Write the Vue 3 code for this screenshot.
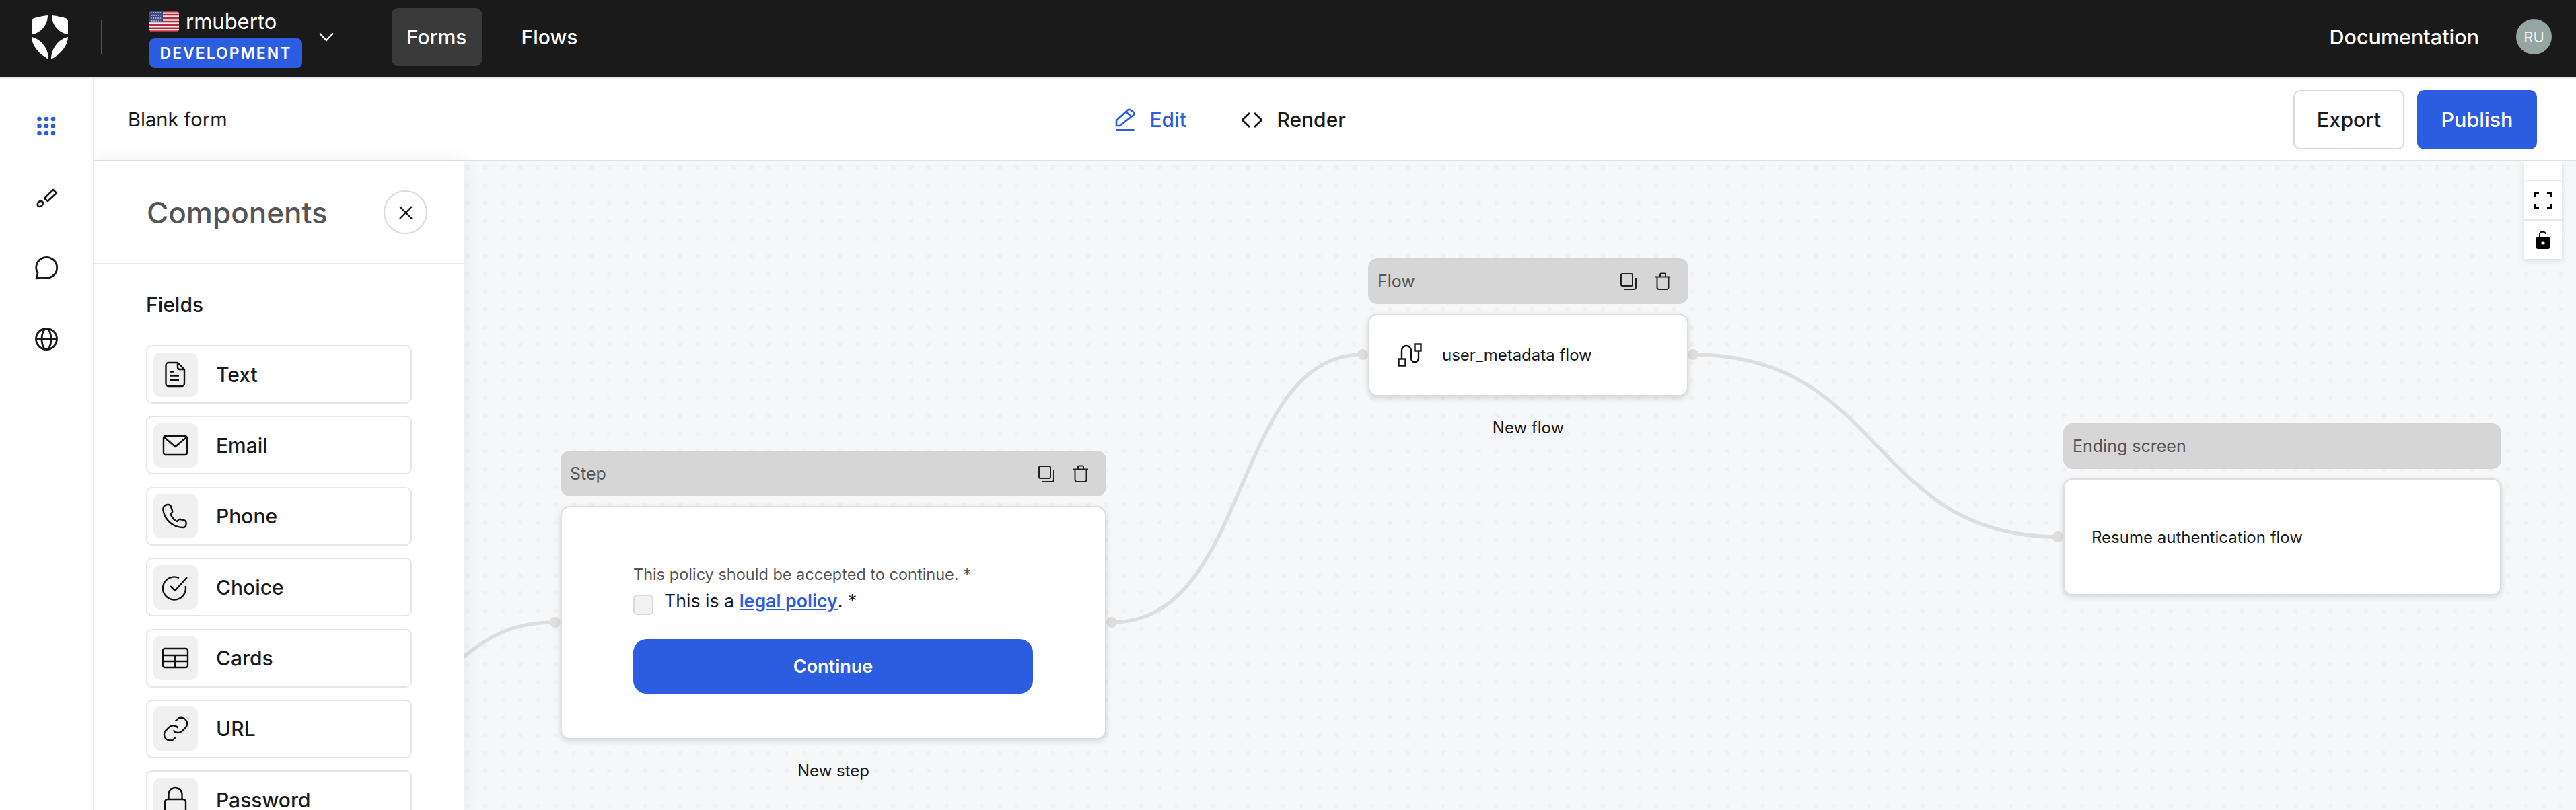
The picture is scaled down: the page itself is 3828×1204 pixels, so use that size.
<template>
  <div class="app">
    <header class="topbar">
      <svg class="logo" viewBox="0 0 54 66" fill="#fff">
        <path d="M24 1C16 2 8 3.5 2.5 5.500Q0 6.500 0 10V29C12 28 24 16 24 1Z" />
        <path d="M30 1C38 2 46 3.500 51.500 5.500Q54 6.500 54 10V29C42 28 30 16 30 1Z" />
        <path d="M0 33C0 45 10 58 25 66C25 50 14 36 0 33Z" />
        <path d="M54 33C54 45 44 58 29 66C29 50 40 36 54 33Z" />
      </svg>
      <div class="top-sep"></div>
      <div class="tenant">
        <div class="tenant-name">
          <svg class="flag" viewBox="0 0 44 32">
            <defs>
              <clipPath id="flagclip"><rect width="44" height="32" rx="5" /></clipPath>
            </defs>
            <g clip-path="url(#flagclip)">
              <rect width="44" height="32" fill="#eee" />
              <path d="M0 1.200H44M0 6.100H44M0 11H44M0 15.900H44M0 20.800H44M0 25.700H44M0 30.600H44" stroke="#b8283f" stroke-width="2.500" />
              <rect width="20" height="17" fill="#3f4a7e" />
              <path d="M2 3H18M3 7H17M2 11H18M3 15H17" stroke="#c9cde0" stroke-width="1.600" stroke-dasharray="1.600 1.800" />
            </g>
          </svg>
          <span>rmuberto</span>
        </div>
        <div class="badge">DEVELOPMENT</div>
      </div>
      <svg class="chevron" viewBox="0 0 22 14" fill="none" stroke="#fff" stroke-width="2.400">
        <path d="M1 1.500L11 12L21 1.500" />
      </svg>
      <nav class="nav">
        <a class="nav-item active">Forms</a>
        <a class="nav-item">Flows</a>
      </nav>
      <a class="docs">Documentation</a>
      <div class="avatar">RU</div>
    </header>

    <div class="workspace">
      <aside class="sidebar">
        <svg class="side-icon" viewBox="0 0 44 44" fill="#2c5de0">
          <template v-for="cy in [9, 19.500, 30]" :key="cy">
            <circle v-for="cx in [11.500, 22, 32]" :key="cx" :cx="cx" :cy="cy" r="3.300" />
          </template>
        </svg>
        <svg class="side-icon" viewBox="0 0 44 44" fill="none" stroke="#1a1a1a" stroke-width="2.600" stroke-linejoin="round">
          <path d="M19 22L32 9L37 14L24 26Z" />
          <path d="M9 30Q9 27 13 26Q17 26 17 29Q16 34 11 34Q8 33 9 30Z" />
        </svg>
        <svg class="side-icon" viewBox="0 0 44 44" fill="none" stroke="#1a1a1a" stroke-width="2.800" stroke-linejoin="round">
          <path d="M7 37L9 29A15.500 15.500 0 1 1 17 35.500C14 35 11 36 7 37Z" />
        </svg>
        <svg class="side-icon" viewBox="0 0 44 44" fill="none" stroke="#1a1a1a" stroke-width="2.800">
          <circle cx="22" cy="22" r="15.500" />
          <ellipse cx="22" cy="22" rx="7" ry="15.500" />
          <path d="M6.500 22H37.500" />
        </svg>
      </aside>

      <main class="main">
        <div class="toolbar">
          <div class="form-title">Blank form</div>
          <div class="tabs">
            <a class="tab tab-active">
              <svg class="tab-icon" viewBox="0 0 44 44" fill="none" stroke="#2c5de0" stroke-width="2.600">
                <path d="M9 31V23L26 7.500Q28 6 30 7.500L34.500 11Q36 13 34.500 15L14 31Z" />
                <path d="M24 11L31 17.500" />
                <path d="M8 37.500H35.500" stroke-width="3" />
              </svg>
              Edit
            </a>
            <a class="tab">
              <svg class="tab-icon" viewBox="0 0 44 44" fill="none" stroke="#1a1a1a" stroke-width="2.800">
                <path d="M18 12L7 22.500L18 33" />
                <path d="M25 12L36 22.500L25 33" />
              </svg>
              Render
            </a>
          </div>
          <div class="actions">
            <button class="btn btn-outline">Export</button>
            <button class="btn btn-primary">Publish</button>
          </div>
        </div>

        <div class="body">
          <section class="panel">
            <div class="panel-head">
              <h2>Components</h2>
              <button class="close-btn">
                <svg viewBox="0 0 20 20" width="20" height="20" fill="none" stroke="#1a1a1a" stroke-width="2.400">
                  <path d="M1 1L19 19M19 1L1 19" />
                </svg>
              </button>
            </div>
            <div class="panel-body">
              <h3>Fields</h3>
              <div class="field-list">
                <div v-for="field in fields" :key="field.label" class="field">
                  <div class="field-icon">
                    <svg viewBox="0 0 44 44" width="44" height="44" fill="none" stroke="#111" stroke-width="2.400" stroke-linejoin="round">
                      <path v-for="d in field.paths" :key="d" :d="d" />
                    </svg>
                  </div>
                  <span>{{ field.label }}</span>
                </div>
              </div>
            </div>
          </section>

          <section class="canvas">
            <svg class="edges" viewBox="689 240 3139 964" fill="none">
              <defs>
                <pattern id="dots" x="3291.800" y="235.800" width="26.370" height="26.370" patternUnits="userSpaceOnUse">
                  <rect x="10.200" y="10.200" width="6" height="6" fill="#eff0f3" />
                </pattern>
              </defs>
              <rect x="689" y="240" width="3139" height="964" fill="url(#dots)" />
              <g stroke="#dedede" stroke-width="5.500">
                <path d="M600 1060C700 960 740 925 825 925" />
                <path d="M1652 925C1860 925 1830 527 2025 527" />
                <path d="M2516 527C2800 527 2780 798 3058 798" />
              </g>
              <g fill="#dedede">
                <circle cx="825" cy="925" r="8" />
                <circle cx="1652" cy="925" r="8" />
                <circle cx="2025" cy="527" r="8" />
                <circle cx="2516" cy="527" r="8" />
                <circle cx="3058" cy="798" r="8" />
              </g>
            </svg>

            <div class="node node-step">
              <div class="node-head">
                <span>Step</span>
                <div class="node-tools">
                  <svg viewBox="0 0 28 28" width="28" height="28" fill="none" stroke="#222" stroke-width="2">
                    <rect x="3" y="3" width="17" height="18" rx="2" />
                    <path d="M25 9V23Q25 26 22 26H8" />
                  </svg>
                  <svg viewBox="0 0 28 28" width="28" height="28" fill="none" stroke="#222" stroke-width="2">
                    <path d="M3 7.500H25M10 7V4Q10 2.500 11.500 2.500H16.500Q18 2.500 18 4V7" />
                    <path d="M5.500 8V23Q5.500 26 8.500 26H19.500Q22.500 26 22.500 23V8" />
                  </svg>
                </div>
              </div>
              <div class="node-card step-card">
                <div class="policy-label">This policy should be accepted to continue. *</div>
                <div class="policy-row">
                  <span class="check"></span>
                  <span class="policy-text">This is a <a class="legal">legal policy</a>. *</span>
                </div>
                <button class="continue">Continue</button>
              </div>
              <div class="node-caption">New step</div>
            </div>

            <div class="node node-flow">
              <div class="node-head">
                <span>Flow</span>
                <div class="node-tools">
                  <svg viewBox="0 0 28 28" width="28" height="28" fill="none" stroke="#222" stroke-width="2">
                    <rect x="3" y="3" width="17" height="18" rx="2" />
                    <path d="M25 9V23Q25 26 22 26H8" />
                  </svg>
                  <svg viewBox="0 0 28 28" width="28" height="28" fill="none" stroke="#222" stroke-width="2">
                    <path d="M3 7.500H25M10 7V4Q10 2.500 11.500 2.500H16.500Q18 2.500 18 4V7" />
                    <path d="M5.500 8V23Q5.500 26 8.500 26H19.500Q22.500 26 22.500 23V8" />
                  </svg>
                </div>
              </div>
              <div class="node-card flow-card">
                <svg viewBox="0 0 44 44" width="44" height="44" fill="none" stroke="#111" stroke-width="2.400">
                  <rect x="5.500" y="27.500" width="10" height="10" />
                  <rect x="29.500" y="5.500" width="9" height="10" />
                  <path d="M10 27V15A7 7 0 0 1 24 15V26A5.500 6.500 0 0 0 35 26V16" />
                </svg>
                <span>user_metadata flow</span>
              </div>
              <div class="node-caption">New flow</div>
            </div>

            <div class="node node-end">
              <div class="node-head"><span>Ending screen</span></div>
              <div class="node-card end-card">Resume authentication flow</div>
            </div>

            <div class="canvas-tools">
              <div class="tool tool-blank"></div>
              <div class="tool">
                <svg viewBox="0 0 28 26" width="28" height="26" fill="none" stroke="#000" stroke-width="3">
                  <path d="M1.500 8V4Q1.500 1.500 4 1.500H8M20 1.500H24Q26.500 1.500 26.500 4V8M26.500 18V22Q26.500 24.500 24 24.500H20M8 24.500H4Q1.500 24.500 1.500 22V18" />
                </svg>
              </div>
              <div class="tool">
                <svg viewBox="0 0 22 28" width="22" height="28">
                  <path d="M6 10V6Q6 2 10 1.500Q14 1.500 15 5" fill="none" stroke="#000" stroke-width="2" />
                  <rect x="1" y="9" width="20" height="18" rx="2.500" fill="#000" />
                  <circle cx="11" cy="18" r="2.500" fill="#fff" />
                </svg>
              </div>
            </div>
          </section>
        </div>
      </main>
    </div>
  </div>
</template>

<script setup>
const fields = [
  {
    label: 'Text',
    paths: [
      'M11.500 4H25L35 14V35A4 4 0 0 1 31 39H11.500A4 4 0 0 1 7.500 35V8A4 4 0 0 1 11.500 4Z',
      'M25 4V11A3 3 0 0 0 28 14H35',
      'M14 17.500H20M14 23.500H27M14 30H27'
    ]
  },
  {
    label: 'Email',
    paths: [
      'M7 8H36A3 3 0 0 1 39 11V33A3 3 0 0 1 36 36H7A3 3 0 0 1 4 33V11A3 3 0 0 1 7 8Z',
      'M5 10L21.500 24L38 10'
    ]
  },
  {
    label: 'Phone',
    paths: [
      'M10 5C6 5 3 8 3.500 13C5 27 18 39 33 39C36 39 37.500 37 37.500 34V31.500C37.500 30 36.500 29 35 28.500L29.500 27C28 26.500 27 27 26 28L24 30C19 28 16 23 14.500 19L16.500 17C17.500 16 17.500 15 17 14L15 8C14.500 6 13 5 11 5Z'
    ]
  },
  {
    label: 'Choice',
    paths: [
      'M36.600 20A17 17 0 1 1 27 8',
      'M14 20L21 27L39 7'
    ]
  },
  {
    label: 'Cards',
    paths: [
      'M6 8H37A3 3 0 0 1 40 11V33A3 3 0 0 1 37 36H6A3 3 0 0 1 3 33V11A3 3 0 0 1 6 8Z',
      'M3 18H40M3 27H40M21 18V36'
    ]
  },
  {
    label: 'URL',
    paths: [
      'M18.500 24.500A8.800 8.800 0 0 0 31.700 25.500L37 20.200A8.800 8.800 0 0 0 24.600 7.800L21.600 10.800',
      'M25.500 20.800A8.800 8.800 0 0 0 12.300 19.800L7 25.100A8.800 8.800 0 0 0 19.400 37.500L22.400 34.500'
    ]
  },
  {
    label: 'Password',
    paths: [
      'M10 21H33A4 4 0 0 1 37 25V38A4 4 0 0 1 33 42H10A4 4 0 0 1 6 38V25A4 4 0 0 1 10 21Z',
      'M11.500 21V14A10 10 0 0 1 31.500 14V21'
    ]
  }
]
</script>

<style>
html, body {
  margin: 0;
  padding: 0;
  background: #fff;
}
</style>

<style scoped>
.app {
  width: 3828px;
  height: 1204px;
  overflow: hidden;
  display: flex;
  flex-direction: column;
  font-family: Inter, "Liberation Sans", sans-serif;
  color: #1a1a1a;
  background: #fff;
}

.topbar {
  flex: 0 0 115px;
  display: flex;
  align-items: center;
  padding: 0 36px 6px 47px;
  background: #1a1a1a;
  color: #fff;
  box-sizing: border-box;
}

.logo {
  width: 54px;
  height: 66px;
  flex: none;
}

.top-sep {
  width: 2px;
  height: 51px;
  margin-left: 49px;
  background: #555;
}

.tenant {
  margin: 7px 0 0 70px;
  display: flex;
  flex-direction: column;
  gap: 9px;
  padding-top: 1px;
}

.tenant-name {
  display: flex;
  align-items: center;
  gap: 10px;
  height: 32px;
  font-size: 31px;
  line-height: 32px;
}

.flag {
  width: 44px;
  height: 32px;
  flex: none;
}

.badge {
  width: 227px;
  height: 44px;
  box-sizing: border-box;
  border-radius: 8px;
  background: #2c5de0;
  font-size: 23px;
  font-weight: 600;
  line-height: 44px;
  letter-spacing: 2px;
  text-align: center;
}

.chevron {
  width: 22px;
  height: 14px;
  margin-left: 25px;
  flex: none;
}

.nav {
  display: flex;
  align-items: center;
  margin-left: 86px;
  gap: 59px;
}

.nav-item {
  height: 86px;
  padding: 0 22px;
  display: flex;
  align-items: center;
  border-radius: 9px;
  font-size: 30px;
  font-weight: 500;
}

.nav-item.active {
  background: #3a3a3a;
}

.nav-item:not(.active) {
  padding: 0;
}

.docs {
  margin-left: auto;
  font-size: 30.500px;
  font-weight: 500;
}

.avatar {
  width: 53px;
  height: 53px;
  margin-left: 55px;
  border-radius: 50%;
  background: #95a5a2;
  color: #f3f5f4;
  display: flex;
  align-items: center;
  justify-content: center;
  font-size: 22px;
}

.workspace {
  flex: 1;
  display: flex;
  min-height: 0;
  border-top: 2px solid #ececec;
}

.sidebar {
  flex: 0 0 138px;
  box-sizing: border-box;
  padding-top: 51px;
  display: flex;
  flex-direction: column;
  align-items: flex-start;
  padding-left: 47px;
  gap: 60.500px;
  background: #fff;
}

.side-icon {
  width: 44px;
  height: 44px;
  flex: none;
}

.main {
  flex: 1;
  min-width: 0;
  display: flex;
  flex-direction: column;
  overflow: hidden;
  border-left: 2px solid #e6e6e6;
}

.toolbar {
  flex: 0 0 123px;
  box-sizing: border-box;
  display: flex;
  align-items: center;
  padding: 0 58px 0 50px;
  border-bottom: 2px solid #e2e2e2;
  background: #fff;
}

.form-title {
  width: 1468px;
  font-size: 29px;
  flex: none;
}

.tabs {
  display: flex;
  align-items: center;
  gap: 84px;
}

.tab {
  display: flex;
  align-items: center;
  gap: 14.500px;
  font-size: 30px;
  font-weight: 500;
}

.tab-active {
  color: #2c5de0;
}

.tab-icon {
  width: 44px;
  height: 44px;
  margin-left: -8px;
}

.actions {
  margin-left: auto;
  display: flex;
  gap: 19px;
}

.btn {
  height: 88px;
  box-sizing: border-box;
  border-radius: 10px;
  font-family: inherit;
  font-size: 30.500px;
  font-weight: 500;
}

.btn-outline {
  width: 165px;
  background: #fff;
  border: 2px solid #d9d9d9;
  color: #1a1a1a;
}

.btn-primary {
  width: 178px;
  background: #2c5de0;
  border: none;
  color: #fff;
}

.body {
  flex: 1;
  display: flex;
  min-height: 0;
}

.panel {
  flex: 0 0 549px;
  position: relative;
  z-index: 2;
  background: #fff;
  box-shadow: 0 0 30px rgba(0, 0, 0, 0.07);
}

.panel-head {
  height: 153px;
  box-sizing: border-box;
  display: flex;
  align-items: center;
  justify-content: space-between;
  padding: 0 54px 0 78px;
  border-bottom: 2px solid #e6e6e6;
}

.panel-head h2 {
  margin: 0;
  font-size: 44px;
  font-weight: 500;
  color: #555;
}

.close-btn {
  width: 65px;
  height: 65px;
  padding: 0;
  border: 2px solid #d9d9d9;
  border-radius: 50%;
  background: #fff;
  display: flex;
  align-items: center;
  justify-content: center;
}

.panel-body {
  padding: 40px 77px 0;
}

.panel-body h3 {
  margin: 0 0 40px;
  font-size: 30px;
  line-height: 40px;
  font-weight: 500;
}

.field-list {
  display: flex;
  flex-direction: column;
  gap: 18.400px;
}

.field {
  height: 87px;
  flex: none;
  box-sizing: border-box;
  display: flex;
  align-items: center;
  gap: 27px;
  padding-left: 9px;
  border: 2px solid #e6e6e6;
  border-radius: 9px;
  font-size: 30px;
  font-weight: 500;
  background: #fff;
}

.field-icon {
  width: 66px;
  height: 66px;
  flex: none;
  border-radius: 10px;
  background: #f0f0f0;
  display: flex;
  align-items: center;
  justify-content: center;
}

.canvas {
  flex: 1;
  position: relative;
  overflow: hidden;
  background-color: #f6f7f9;
}

.edges {
  position: absolute;
  left: 0;
  top: 0;
  width: 3139px;
  height: 964px;
}

.node {
  position: absolute;
  display: flex;
  flex-direction: column;
}

.node-step {
  left: 144px;
  top: 430px;
  width: 811px;
}

.node-flow {
  left: 1344px;
  top: 144px;
  width: 476px;
}

.node-end {
  left: 2377px;
  top: 389px;
  width: 651px;
}

.node-head {
  height: 68px;
  flex: none;
  box-sizing: border-box;
  display: flex;
  align-items: center;
  justify-content: space-between;
  padding: 0 24px 0 14px;
  border-radius: 14px;
  background: #d6d6d6;
  color: #555;
  font-size: 25px;
}

.node-tools {
  display: flex;
  gap: 23px;
}

.node-card {
  margin-top: 14px;
  box-sizing: border-box;
  border: 2px solid #dedede;
  border-radius: 14px;
  background: #fff;
  box-shadow: 0 3px 8px rgba(0, 0, 0, 0.14);
}

.step-card {
  height: 347px;
  padding: 85px 106px 0;
}

.policy-label {
  font-size: 23.500px;
  line-height: 30px;
  color: #555;
}

.policy-row {
  display: flex;
  align-items: flex-start;
  gap: 16px;
  margin-top: 7px;
  font-size: 26.700px;
  line-height: 34px;
}

.check {
  width: 30px;
  height: 30px;
  margin-top: 8px;
  flex: none;
  box-sizing: border-box;
  border: 2px solid #d9d9d9;
  border-radius: 6px;
  background: #f2f2f2;
}

.legal {
  color: #2c5de0;
  font-weight: 600;
  text-decoration: underline;
}

.continue {
  display: block;
  width: 594px;
  height: 81px;
  margin-top: 36px;
  border: none;
  border-radius: 20px;
  background: #2c5de0;
  color: #fff;
  font-family: inherit;
  font-size: 27px;
  font-weight: 600;
}

.node-caption {
  margin-top: 32px;
  text-align: center;
  font-size: 24px;
  line-height: 30px;
}

.flow-card {
  height: 123px;
  display: flex;
  align-items: center;
  gap: 26px;
  padding-left: 38px;
  font-size: 24px;
}

.end-card {
  height: 174px;
  display: flex;
  align-items: center;
  padding-left: 40px;
  font-size: 24px;
}

.canvas-tools {
  position: absolute;
  top: 0;
  right: 21px;
  width: 57px;
  background: #e8e8e8;
  box-shadow: 0 3px 10px rgba(0, 0, 0, 0.1);
  display: flex;
  flex-direction: column;
  gap: 2px;
}

.tool {
  height: 57px;
  background: #fff;
  display: flex;
  align-items: center;
  justify-content: center;
}

.tool-blank {
  height: 27px;
}
</style>
